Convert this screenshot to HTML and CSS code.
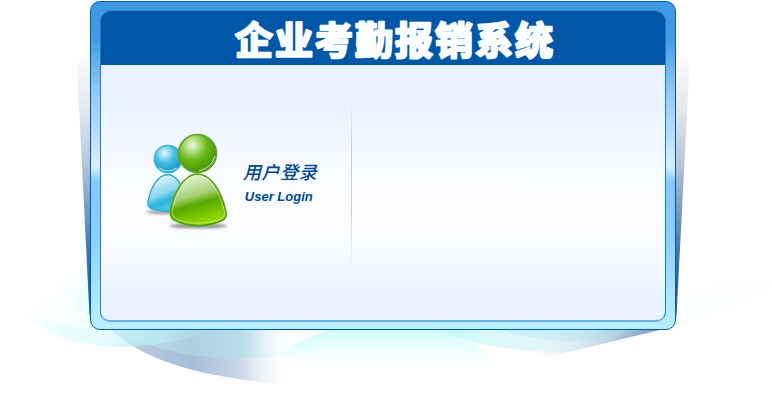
FILE: index.html
```html
<!DOCTYPE html>
<html lang="zh-CN">
<head>
<meta charset="utf-8">
<title>企业考勤报销系统</title>
<link rel="stylesheet" href="styles.css">
</head>
<body>
<svg class="backdrop" viewBox="0 0 772 408" aria-hidden="true">
  <defs>
    <linearGradient id="side" x1="0" y1="0" x2="0" y2="1">
      <stop offset="0" stop-color="#fbfbfc"/><stop offset=".2" stop-color="#e2e8ef"/><stop offset=".42" stop-color="#b2c4d8"/><stop offset=".72" stop-color="#4a7db1"/><stop offset="1" stop-color="#07519b"/>
    </linearGradient>
    <linearGradient id="navy" gradientUnits="userSpaceOnUse" x1="112" y1="0" x2="290" y2="0">
      <stop offset="0" stop-color="#a3bbd3" stop-opacity=".7"/><stop offset=".45" stop-color="#a6bed8"/><stop offset=".72" stop-color="#bfd0e3" stop-opacity=".85"/><stop offset=".9" stop-color="#f1f4fa" stop-opacity=".5"/><stop offset="1" stop-color="#fff" stop-opacity="0"/>
    </linearGradient>
    <linearGradient id="corner" gradientUnits="userSpaceOnUse" x1="530" y1="0" x2="665" y2="0">
      <stop offset="0" stop-color="#e9edf4" stop-opacity="0"/><stop offset=".45" stop-color="#d3deeb"/><stop offset="1" stop-color="#6f93bb"/>
    </linearGradient>
    <linearGradient id="aqua" gradientUnits="userSpaceOnUse" x1="20" y1="0" x2="217" y2="0">
      <stop offset="0" stop-color="#d2fbfd" stop-opacity="0"/><stop offset=".4" stop-color="#dcfcfd" stop-opacity=".65"/><stop offset=".65" stop-color="#b2edf0" stop-opacity=".7"/><stop offset="1" stop-color="#d8fbfd" stop-opacity="0"/>
    </linearGradient>
    <linearGradient id="teal" gradientUnits="userSpaceOnUse" x1="50" y1="0" x2="330" y2="0">
      <stop offset="0" stop-color="#e2ffff" stop-opacity=".15"/><stop offset=".35" stop-color="#c5f5f7" stop-opacity=".35"/><stop offset=".7" stop-color="#a6dfe5" stop-opacity=".45"/><stop offset=".83" stop-color="#e8ffff" stop-opacity=".3"/><stop offset="1" stop-color="#fff" stop-opacity="0"/>
    </linearGradient>
    <linearGradient id="pool" gradientUnits="userSpaceOnUse" x1="0" y1="328" x2="0" y2="372">
      <stop offset="0" stop-color="#ccfcff"/><stop offset=".5" stop-color="#ecfeff"/><stop offset="1" stop-color="#fff" stop-opacity="0"/>
    </linearGradient>
    <linearGradient id="wave" gradientUnits="userSpaceOnUse" x1="430" y1="0" x2="650" y2="0">
      <stop offset="0" stop-color="#c0fbff"/><stop offset=".3" stop-color="#ddf8fa"/><stop offset=".65" stop-color="#d2f0f4" stop-opacity=".5"/><stop offset="1" stop-color="#b0dce9" stop-opacity="0"/>
    </linearGradient>
    <linearGradient id="mist" x1="0" y1="0" x2="0" y2="1">
      <stop offset="0" stop-color="#fbffff" stop-opacity="0"/><stop offset="1" stop-color="#f3fdff" stop-opacity=".7"/>
    </linearGradient>
    <linearGradient id="leftMist" x1="0" y1="0" x2="1" y2=".6">
      <stop offset="0" stop-color="#fff" stop-opacity="0"/><stop offset="1" stop-color="#e6fdfd"/>
    </linearGradient>
  </defs>
  <path fill="url(#leftMist)" d="M54 278L92 270V319Q68 303 54 278Z"/>
  <path fill="url(#leftMist)" opacity=".5" d="M15 309L92 285V343Q45 336 15 309Z"/>
  <path fill="url(#mist)" d="M676 290Q735 285 772 268V290Q746 300 726 308Q702 318 676 324Z"/>
  <path fill="url(#side)" d="M77 66Q77 59 84 59H92V315H89.500Z"/>
  <path fill="url(#side)" d="M689.500 66Q689.500 59 682 59H674V315H676.500Z"/>
  <path fill="url(#navy)" d="M110 328C136 356 190 377 292 385V328Z"/>
  <path fill="url(#aqua)" d="M20 313Q55 346 115 347Q170 347 217 329H82Z"/>
  <path fill="url(#teal)" d="M110 328Q162 356 224 358H340V328Z"/>
  <path fill="url(#pool)" d="M280 354Q308 334 338 328H437L477 345L510 374H330Q297 363 280 354Z"/>
  <path fill="url(#corner)" d="M480 328H668L548 357L520 350Z"/>
  <path fill="url(#wave)" d="M431 328Q485 352 567 352L650 328Z"/>
  <path fill="#a5e2ea" opacity=".35" d="M494 328Q530 341 575 341Q610 341 632 328Z"/>
</svg>
<main class="frame">
  <section class="panel">
    <header class="banner">
      <h1><svg class="title" width="470" height="54"><text x="134" y="42.500">企业考勤报销系统</text></svg></h1>
    </header>
    <div class="content">
      <div class="intro">
        <svg class="users" width="90" height="102" viewBox="0 0 90 102" aria-hidden="true">
          <defs>
            <radialGradient id="blueHead" cx=".38" cy=".28" r=".7"><stop offset="0" stop-color="#eafaff"/><stop offset=".5" stop-color="#48bfe3"/><stop offset="1" stop-color="#159bcb"/></radialGradient>
            <radialGradient id="greenHead" cx=".36" cy=".28" r=".72"><stop offset="0" stop-color="#effae0"/><stop offset=".25" stop-color="#b1df80"/><stop offset=".55" stop-color="#69b817"/><stop offset="1" stop-color="#429600"/></radialGradient>
            <linearGradient id="blueBody" x1=".2" y1="0" x2=".65" y2="1"><stop offset="0" stop-color="#f3fcff"/><stop offset=".5" stop-color="#8bd7ec"/><stop offset=".68" stop-color="#2cb3dc"/><stop offset="1" stop-color="#56cdeb"/></linearGradient>
            <linearGradient id="greenBody" x1=".3" y1="0" x2=".62" y2="1"><stop offset="0" stop-color="#f4faeb"/><stop offset=".42" stop-color="#a3cf72"/><stop offset=".58" stop-color="#58a900"/><stop offset="1" stop-color="#9be000"/></linearGradient>
            <filter id="soft" x="-20%" y="-100%" width="140%" height="300%"><feGaussianBlur stdDeviation="1.500"/></filter>
          </defs>
          <ellipse cx="21" cy="82" rx="19" ry="2" fill="#555" opacity=".6" filter="url(#soft)"/>
          <ellipse cx="54" cy="96" rx="29" ry="2" fill="#333" opacity=".65" filter="url(#soft)"/>
          <path d="M24 44.500C13 45 6 59 4 72Q3 77 8 79C17 82 31 82 41 77Q45 74 42 67C38 55 33 45 24 44.500Z" fill="url(#blueBody)" stroke="#25aad2" stroke-width="1.300"/>
          <circle cx="24" cy="29" r="13.700" fill="url(#blueHead)" stroke="#3aaed3" stroke-width="1.300"/>
          <path d="M15 38Q24 44 33 38" fill="none" stroke="#a9e4f4" stroke-width="1.200"/>
          <path d="M53.500 44C39 44 29 65 26.500 82Q26 88 31 90.500C43 97 65 97 78 90.500Q83 88 82 82C78 62 67 44 53.500 44Z" fill="url(#greenBody)" stroke="#519e0b" stroke-width="1.500"/>
          <path d="M53.500 45.500C40 46 31 65 28 82Q28 87 32 89C45 94.500 64 94.500 77 89Q81 87 80.500 82C76 62 66 46 53.500 45.500Z" fill="none" stroke="#dbf7a2" stroke-width=".8" opacity=".75"/>
          <circle cx="53.500" cy="23.500" r="19" fill="url(#greenHead)" stroke="#62a12b" stroke-width="1.600"/>
          <path d="M55 40.800Q68 38 70.700 26Q69 37 55 40.800Z" fill="#dff3bb" stroke="#dff3bb" stroke-width=".8" opacity=".8"/>
        </svg>
        <div class="labels">
          <h2>用户登录</h2>
          <p>User Login</p>
        </div>
      </div>
      <div class="divider"></div>
    </div>
  </section>
</main>
</body>
</html>
```
FILE: styles.css
```css
* { box-sizing: border-box; }
html, body { margin: 0; height: 100%; overflow: hidden; }
body {
  background: #fff;
  color: #004791;
  font-family: "Liberation Sans", "Noto Sans CJK SC", sans-serif;
}
h1, h2, p { margin: 0; }
.backdrop {
  position: absolute;
  inset: 0;
  width: 772px;
  height: 408px;
  z-index: -1;
}
.frame {
  width: 586px;
  height: 329px;
  margin: 1px 0 0 90px;
  padding: 8px 9px;
  border: 1px solid #0059a5;
  border-radius: 10px;
  background: linear-gradient(#3e9ae4 0, #429be3 35px, #93c8f3 90px, #d3ebff 158px, #d6edff 165px, #83c8ff 180px, #8dd1ff 240px, #b4eaff 305px, #b8eeff 100%);
}
.panel {
  height: 312px;
  border: 1px solid #1b7acb;
  border-top-color: #4189cd;
  border-bottom: 2px solid #6eafe3;
  border-radius: 10px;
  background: linear-gradient(#e8f3ff 54px, #eaf4ff 95px, #f8fbff 160px, #fcfdff 205px, #f5f9ff 250px, #e8f3ff 292px, #e8f3ff 100%);
}
.banner {
  height: 54px;
  border-radius: 9px 9px 0 0;
  background: #0056a7;
}
.title { display: block; overflow: visible; }
.title text {
  fill: #fafeff;
  font: 700 38px "Noto Sans CJK SC", sans-serif;
  letter-spacing: 2px;
  stroke: #fafeff;
  stroke-width: 2.5px;
  stroke-linejoin: round;
}
.content { display: flex; height: 255px; }
.intro {
  display: flex;
  width: 250px;
  padding: 65px 0 0 43px;
}
.users { flex: none; }
.labels { padding: 28px 0 0 9px; white-space: nowrap; }
.labels h2 {
  font: italic 500 18px/26px "Noto Sans CJK SC", sans-serif;
  letter-spacing: .6px;
}
.labels p { margin: 5px 0 0 1.8px; font: italic bold 13px/16px "Liberation Sans", sans-serif; }
.divider {
  width: 1px;
  height: 170px;
  margin-top: 32px;
  background: linear-gradient(transparent, #c8cfd7 30%, #c8cfd7 65%, transparent);
}
```
